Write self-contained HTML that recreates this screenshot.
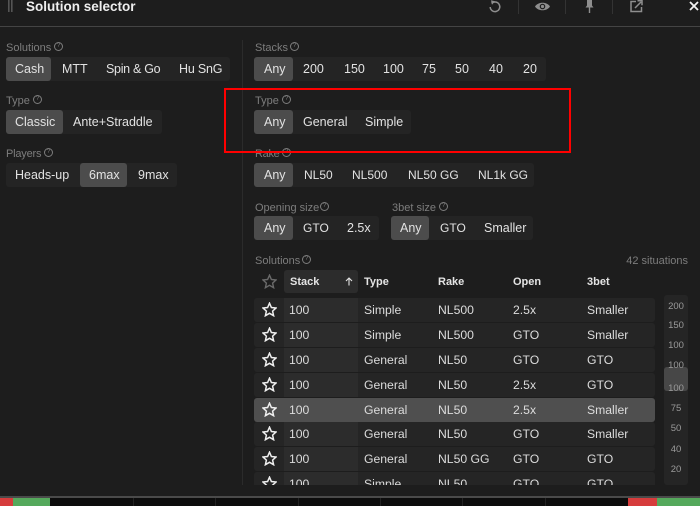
<!DOCTYPE html>
<html><head><meta charset="utf-8"><style>
html,body{margin:0;padding:0;background:#1d1d1d}
#r{position:relative;width:700px;height:506px;overflow:hidden;background:#1d1d1d;font-family:"Liberation Sans",sans-serif;color:#e2e2e2;font-size:12.5px}
#r div,#r span,#r svg{position:absolute}
.g{background:#242424;border-radius:3px;height:24px}
.a{background:#4c4c4c;border-radius:3px;height:24px}
.t{white-space:nowrap;line-height:24px;height:24px}
.l{white-space:nowrap;color:#7d7d7d;font-size:11px;line-height:14px;margin-top:1px}
.h{white-space:nowrap;color:#e4e4e4;font-weight:bold;font-size:11px;line-height:14px}
.q{width:7px;height:7px;border:1px solid #7d7d7d;border-radius:50%;color:#7d7d7d;font-size:6px;line-height:7px;text-align:center}
.row{left:254px;width:401px;height:24px;background:#252525;border-radius:3px}
.row i{position:absolute;left:30px;top:0;width:74px;height:24px;background:#2c2c2c}
.row.on{background:#4f4f4f}.row.on i{background:none}
.row span{line-height:24px;top:0;white-space:nowrap;color:#dcdcdc;font-size:12.2px}
.row svg{left:8px;top:4px}
.n{left:664px;width:24px;text-align:center;font-size:9.5px;line-height:12px;color:#9a9a9a;margin-top:2px}
.d{top:498px;width:1px;height:8px;background:#222}
.v{top:0;width:1px;height:14px;background:#333}
.s{font-size:12px}
</style></head><body><div id="r">
<svg style="left:8px;top:0" width="5" height="12"><g fill="#555"><rect x="0" y="0" width="1.6" height="12"/><rect x="3" y="0" width="1.6" height="12"/></g></svg>
<div style="left:26px;top:-1px;font-weight:bold;font-size:13.5px;line-height:15px;color:#eee;white-space:nowrap">Solution selector</div>
<div style="left:0;top:26px;width:700px;height:1px;background:#444"></div>

<svg style="left:488px;top:0" width="14" height="13" viewBox="0 0 14 13"><path d="M3.6 3.4A4.8 4.8 0 1 1 2.2 7" fill="none" stroke="#8e8e8e" stroke-width="1.5"/><path d="M3 0.2L7 1.2L4 4.8Z" fill="#8e8e8e"/></svg>
<div class="v" style="left:518px"></div>
<svg style="left:535px;top:1px" width="15" height="11" viewBox="0 0 15 11"><path d="M0 5.5C3 0.5 12 0.5 15 5.5C12 10.5 3 10.5 0 5.5Z" fill="#8e8e8e"/><circle cx="7.5" cy="5.5" r="2.8" fill="#1d1d1d"/><circle cx="7.5" cy="5.5" r="1.6" fill="#8e8e8e"/></svg>
<div class="v" style="left:565px"></div>
<svg style="left:585px;top:0" width="9" height="13" viewBox="0 0 9 13"><path d="M2 0H7V5.5L8.5 7.5H.5L2 5.5Z" fill="#8e8e8e"/><rect x="3.8" y="7" width="1.4" height="6" fill="#8e8e8e"/></svg>
<div class="v" style="left:612px"></div>
<svg style="left:630px;top:0" width="13" height="13" viewBox="0 0 13 13"><path d="M6 1.5H1V11.5H11.5V7" fill="none" stroke="#8e8e8e" stroke-width="1.5"/><path d="M5 8L11 2M7.5 .8H12V5.3" fill="none" stroke="#8e8e8e" stroke-width="1.5"/></svg>
<svg style="left:689px;top:1px" width="10" height="10" viewBox="0 0 10 10"><path d="M1 1L9 9M9 1L1 9" stroke="#f2f2f2" stroke-width="1.8"/></svg>

<div style="left:242px;top:40px;width:1px;height:445px;background:#2b2b2b"></div>

<div class="l" style="left:6px;top:40px">Solutions</div><div class="q" style="left:54px;top:42px">?</div>
<div class="g" style="left:6px;top:57px;width:224px"></div><div class="a" style="left:6px;top:57px;width:45px"></div>
<div class="t" style="left:15px;top:57px">Cash</div><div class="t" style="left:62px;top:57px">MTT</div><div class="t" style="left:106px;top:57px;letter-spacing:-.3px">Spin &amp; Go</div><div class="t" style="left:179px;top:57px;letter-spacing:-.2px">Hu SnG</div>

<div class="l" style="left:6px;top:93px">Type</div><div class="q" style="left:33px;top:95px">?</div>
<div class="g" style="left:6px;top:110px;width:156px"></div><div class="a" style="left:6px;top:110px;width:57px"></div>
<div class="t" style="left:15px;top:110px">Classic</div><div class="t" style="left:73px;top:110px">Ante+Straddle</div>

<div class="l" style="left:6px;top:146px;letter-spacing:-.2px">Players</div><div class="q" style="left:44px;top:148px">?</div>
<div class="g" style="left:6px;top:163px;width:171px"></div><div class="a" style="left:80px;top:163px;width:47px"></div>
<div class="t" style="left:15px;top:163px">Heads-up</div><div class="t" style="left:89px;top:163px">6max</div><div class="t" style="left:138px;top:163px">9max</div>

<div class="l" style="left:255px;top:40px">Stacks</div><div class="q" style="left:290px;top:42px">?</div>
<div class="g" style="left:254px;top:57px;width:292px"></div><div class="a" style="left:254px;top:57px;width:39px"></div>
<div class="t" style="left:264px;top:57px">Any</div><div class="t" style="left:303px;top:57px">200</div><div class="t" style="left:344px;top:57px">150</div><div class="t" style="left:383px;top:57px">100</div><div class="t" style="left:422px;top:57px">75</div><div class="t" style="left:455px;top:57px">50</div><div class="t" style="left:489px;top:57px">40</div><div class="t" style="left:523px;top:57px">20</div>

<div class="l" style="left:255px;top:93px">Type</div><div class="q" style="left:282px;top:95px">?</div>
<div class="g" style="left:254px;top:110px;width:157px"></div><div class="a" style="left:254px;top:110px;width:39px"></div>
<div class="t" style="left:264px;top:110px">Any</div><div class="t" style="left:303px;top:110px">General</div><div class="t" style="left:365px;top:110px">Simple</div>

<div class="l" style="left:255px;top:146px;letter-spacing:-.3px">Rake</div><div class="q" style="left:282px;top:148px">?</div>
<div class="g" style="left:254px;top:163px;width:280px"></div><div class="a" style="left:254px;top:163px;width:39px"></div>
<div class="t" style="left:264px;top:163px">Any</div><div class="t s" style="left:304px;top:163px">NL50</div><div class="t s" style="left:352px;top:163px">NL500</div><div class="t s" style="left:408px;top:163px">NL50 GG</div><div class="t s" style="left:478px;top:163px">NL1k GG</div>

<div style="left:224px;top:88px;width:343px;height:61px;border:2px solid #f00"></div>

<div class="l" style="left:255px;top:200px">Opening size</div><div class="q" style="left:320px;top:202px">?</div>
<div class="g" style="left:254px;top:216px;width:125px"></div><div class="a" style="left:254px;top:216px;width:39px"></div>
<div class="t" style="left:264px;top:216px">Any</div><div class="t s" style="left:303px;top:216px">GTO</div><div class="t" style="left:347px;top:216px">2.5x</div>

<div class="l" style="left:392px;top:200px">3bet size</div><div class="q" style="left:439px;top:202px">?</div>
<div class="g" style="left:391px;top:216px;width:142px"></div><div class="a" style="left:391px;top:216px;width:38px"></div>
<div class="t" style="left:400px;top:216px">Any</div><div class="t s" style="left:440px;top:216px">GTO</div><div class="t" style="left:484px;top:216px">Smaller</div>

<div class="l" style="left:255px;top:253px">Solutions</div><div class="q" style="left:302px;top:255px">?</div>
<div class="l" style="right:12px;top:253px">42 situations</div>

<svg style="left:262px;top:274px" width="15" height="15" viewBox="0 0 15 15"><path d="M7.5 1.2L9.4 5.5L14 6L10.6 9.1L11.6 13.7L7.5 11.3L3.4 13.7L4.4 9.1L1 6L5.6 5.5Z" fill="none" stroke="#6a6a6a" stroke-width="1.4"/></svg>
<div style="left:284px;top:270px;width:74px;height:23px;background:#2c2c2c;border-radius:3px"></div>
<div class="h" style="left:290px;top:275px">Stack</div>
<svg style="left:345px;top:277px" width="8" height="9" viewBox="0 0 8 9"><path d="M4 8.5V1M1 4L4 1L7 4" fill="none" stroke="#e4e4e4" stroke-width="1.1"/></svg>
<div class="h" style="left:364px;top:275px">Type</div><div class="h" style="left:438px;top:275px">Rake</div><div class="h" style="left:513px;top:275px">Open</div><div class="h" style="left:587px;top:275px">3bet</div>

<div style="left:0;top:295px;width:660px;height:190px;overflow:hidden">
<svg width="0" height="0" style="left:0;top:0"><defs><path id="s" d="M7.5 1.2L9.4 5.5L14 6L10.6 9.1L11.6 13.7L7.5 11.3L3.4 13.7L4.4 9.1L1 6L5.6 5.5Z"/></defs></svg>
<div class="row" style="top:3px"><i></i><svg width="15" height="15" viewBox="0 0 15 15"><use href="#s" fill="none" stroke="#f0f0f0" stroke-width="1.5"/></svg><span style="left:35px">100</span><span style="left:110px">Simple</span><span style="left:184px">NL500</span><span style="left:259px">2.5x</span><span style="left:333px">Smaller</span></div>
<div class="row" style="top:28px"><i></i><svg width="15" height="15" viewBox="0 0 15 15"><use href="#s" fill="none" stroke="#f0f0f0" stroke-width="1.5"/></svg><span style="left:35px">100</span><span style="left:110px">Simple</span><span style="left:184px">NL500</span><span style="left:259px">GTO</span><span style="left:333px">Smaller</span></div>
<div class="row" style="top:53px"><i></i><svg width="15" height="15" viewBox="0 0 15 15"><use href="#s" fill="none" stroke="#f0f0f0" stroke-width="1.5"/></svg><span style="left:35px">100</span><span style="left:110px">General</span><span style="left:184px">NL50</span><span style="left:259px">GTO</span><span style="left:333px">GTO</span></div>
<div class="row" style="top:78px"><i></i><svg width="15" height="15" viewBox="0 0 15 15"><use href="#s" fill="none" stroke="#f0f0f0" stroke-width="1.5"/></svg><span style="left:35px">100</span><span style="left:110px">General</span><span style="left:184px">NL50</span><span style="left:259px">2.5x</span><span style="left:333px">GTO</span></div>
<div class="row on" style="top:103px"><i></i><svg width="15" height="15" viewBox="0 0 15 15"><use href="#s" fill="none" stroke="#f0f0f0" stroke-width="1.5"/></svg><span style="left:35px">100</span><span style="left:110px">General</span><span style="left:184px">NL50</span><span style="left:259px">2.5x</span><span style="left:333px">Smaller</span></div>
<div class="row" style="top:127px"><i></i><svg width="15" height="15" viewBox="0 0 15 15"><use href="#s" fill="none" stroke="#f0f0f0" stroke-width="1.5"/></svg><span style="left:35px">100</span><span style="left:110px">General</span><span style="left:184px">NL50</span><span style="left:259px">GTO</span><span style="left:333px">Smaller</span></div>
<div class="row" style="top:152px"><i></i><svg width="15" height="15" viewBox="0 0 15 15"><use href="#s" fill="none" stroke="#f0f0f0" stroke-width="1.5"/></svg><span style="left:35px">100</span><span style="left:110px">General</span><span style="left:184px">NL50 GG</span><span style="left:259px">GTO</span><span style="left:333px">GTO</span></div>
<div class="row" style="top:177px"><i></i><svg width="15" height="15" viewBox="0 0 15 15"><use href="#s" fill="none" stroke="#f0f0f0" stroke-width="1.5"/></svg><span style="left:35px">100</span><span style="left:110px">Simple</span><span style="left:184px">NL50</span><span style="left:259px">GTO</span><span style="left:333px">GTO</span></div>
</div>

<div style="left:664px;top:295px;width:24px;height:190px;background:#252525;border-radius:3px"></div>
<div style="left:664px;top:367px;width:24px;height:24px;background:#474747;border-radius:3px"></div>
<div class="n" style="top:299px">200</div><div class="n" style="top:318px">150</div><div class="n" style="top:338px">100</div><div class="n" style="top:358px">100</div><div class="n" style="top:381px">100</div><div class="n" style="top:401px">75</div><div class="n" style="top:421px">50</div><div class="n" style="top:442px">40</div><div class="n" style="top:462px">20</div>

<div style="left:0;top:496px;width:700px;height:2px;background:#4a4a4a"></div>
<div style="left:0;top:498px;width:700px;height:8px;background:#0c0c0c"></div>
<div style="left:0;top:498px;width:13px;height:8px;background:#d63c3c"></div>
<div style="left:13px;top:498px;width:37px;height:8px;background:#55a95c"></div>
<div style="left:628px;top:498px;width:29px;height:8px;background:#d63c3c"></div>
<div style="left:657px;top:498px;width:43px;height:8px;background:#55a95c"></div>
<div class="d" style="left:133px"></div><div class="d" style="left:215px"></div><div class="d" style="left:298px"></div><div class="d" style="left:380px"></div><div class="d" style="left:462px"></div><div class="d" style="left:545px"></div>
</div></body></html>
